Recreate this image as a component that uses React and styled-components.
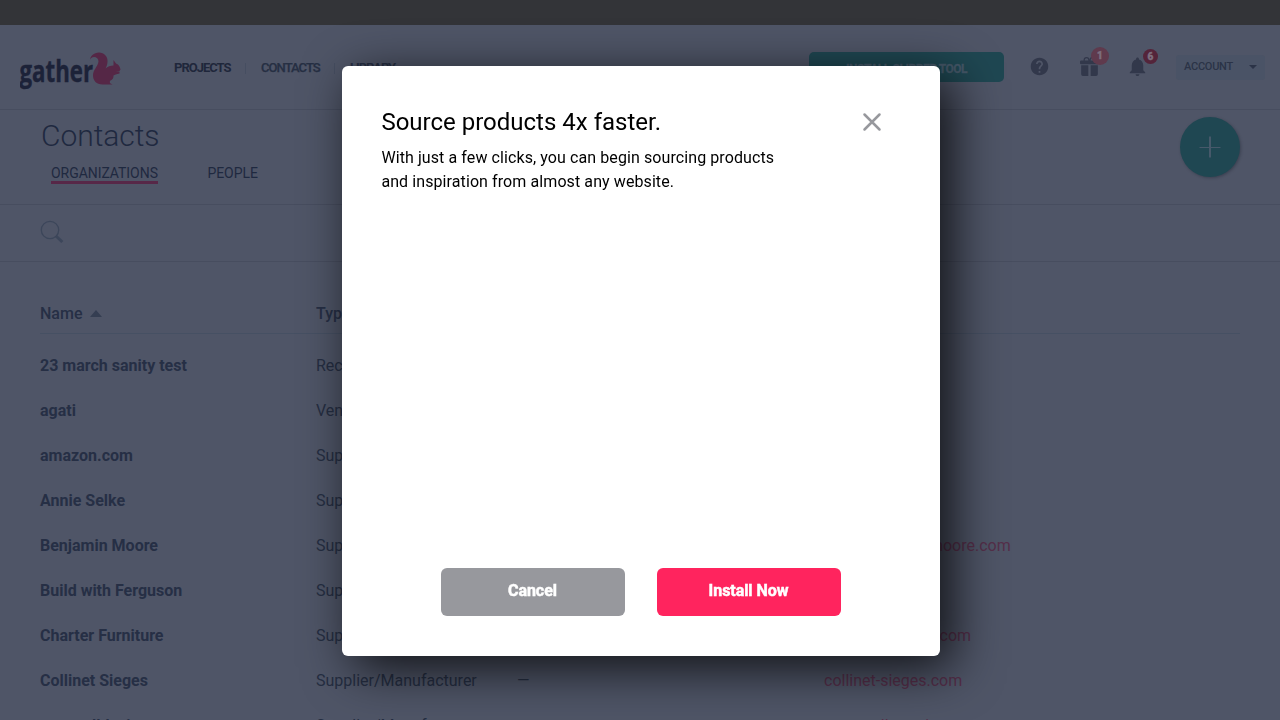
import React from 'react';
import styled, { createGlobalStyle } from 'styled-components';
import { MdHelp, MdNotifications } from 'react-icons/md';
import { BsGiftFill } from 'react-icons/bs';

const GlobalStyle = createGlobalStyle`
  * { box-sizing: border-box; }
  html, body { margin: 0; height: 100%; overflow: hidden; }
  body { font-family: Roboto, 'Liberation Sans', sans-serif; font-size: 16px; background: #4f5567; color: #262f45; }
  button { font-family: inherit; border: 0; padding: 0; }
`;

const Page = styled.div`
  height: 720px;
  overflow: hidden;
  display: flex;
  flex-direction: column;
`;
const TopBand = styled.div`
  flex: none;
  height: 25px;
  background: #333438;
`;
const Header = styled.header`
  flex: none;
  height: 85px;
  display: flex;
  align-items: center;
  padding: 0 15px 0 20px;
  border-bottom: 1px solid #474d5f;
`;
const Logo = styled.svg`
  display: block;
  width: 102px;
  height: 40px;
  margin: 6px 52px 0 0;
`;
const Nav = styled.nav`
  display: flex;
  align-items: center;
`;
const NavItem = styled.a`
  font-size: 13px;
  font-weight: ${(p) => (p.$active ? 700 : 500)};
  letter-spacing: ${(p) => (p.$active ? -1 : -0.95)}px;
  color: ${(p) => (p.$active ? '#1f273b' : '#262f43')};
  -webkit-text-stroke: ${(p) => (p.$active ? 0 : 0.25)}px currentColor;
  width: ${(p) => p.$width}px;
  white-space: nowrap;
`;
const Divider = styled.span`
  width: 1px;
  height: 11px;
  margin: 2px 15px 0 14px;
  background: #464e61;
`;
const Actions = styled.div`
  margin-left: auto;
  display: flex;
  align-items: center;
`;
const ClipperButton = styled.button`
  width: 195px;
  height: 30px;
  border-radius: 5px;
  background: #1f4752;
  color: #46596a;
  font-size: 12px;
  font-weight: 700;
  letter-spacing: -0.5px;
  -webkit-text-stroke: 0.3px currentColor;
  padding-top: 3px;
`;
const IconSlot = styled.span`
  position: relative;
  display: flex;
  color: #32384b;
  margin-left: ${(p) => p.$gap}px;
  margin-bottom: 2px;
`;
const Badge = styled.span`
  position: absolute;
  left: ${(p) => p.$left}px;
  top: ${(p) => p.$top}px;
  width: ${(p) => p.$size}px;
  height: ${(p) => p.$size}px;
  border-radius: 50%;
  display: flex;
  align-items: center;
  justify-content: center;
  background: ${(p) => p.$color};
  color: #7d6f7e;
  font-size: 10px;
  font-weight: 900;
  -webkit-text-stroke: 0.4px currentColor;
`;
const AccountButton = styled.button`
  display: flex;
  align-items: center;
  justify-content: space-between;
  width: 89px;
  height: 25px;
  margin-left: 27px;
  padding: 0 8px 2px;
  border-radius: 3px;
  background: #4a5366;
  color: #2b3347;
  font-size: 11px;
  font-weight: 500;
  letter-spacing: -0.25px;
`;
const Caret = styled.span`
  border: 4px solid transparent;
  border-top-color: #2b3347;
  border-bottom: 0;
  margin-top: 2px;
`;

const Intro = styled.section`
  flex: none;
  height: 95px;
  display: flex;
  justify-content: space-between;
  padding: 7px 40px 0 41px;
  border-bottom: 1px solid #474d5f;
`;
const Title = styled.h1`
  margin: 0;
  font-size: 30px;
  line-height: 38px;
  font-weight: 300;
  letter-spacing: -0.05px;
  color: #1f2940;
`;
const Tabs = styled.div`
  display: flex;
  gap: 49.5px;
  padding: 10px 0 0 10px;
`;
const Tab = styled.a`
  height: 19px;
  font-size: 14px;
  line-height: 17px;
  letter-spacing: -0.05px;
  color: #1f2940;
  border-bottom: 3px solid ${(p) => (p.$active ? '#572848' : 'transparent')};
`;
const AddButton = styled.button`
  width: 60px;
  height: 60px;
  border-radius: 50%;
  background: #1f4752;
  box-shadow: 1px 1px 3px rgba(20, 26, 40, 0.35);
  display: flex;
  align-items: center;
  justify-content: center;
`;
const SearchBar = styled.section`
  flex: none;
  height: 57px;
  display: flex;
  align-items: center;
  padding: 0 40px 2px;
  border-bottom: 1px solid #474d5f;
`;
const Table = styled.section`
  flex: none;
  padding: 32px 40px 0;
`;
const Row = styled.div`
  display: grid;
  grid-template-columns: 276px 201px 307px 1fr;
  align-items: center;
  height: 45px;
`;
const HeadRow = styled(Row)`
  height: 40px;
  margin-bottom: 9px;
  font-weight: 500;
  border-bottom: 1px solid #465063;
`;
const HeadCell = styled.span`
  display: flex;
  align-items: center;
  gap: 8px;
`;
const SortUp = styled.span`
  border: 6.500px solid transparent;
  border-bottom: 7px solid #353e52;
  border-top: 0;
`;
const Name = styled.span`
  font-weight: 700;
`;
const Cell = styled.span`
  color: #252e42;
`;
const Site = styled.a`
  color: #552f4a;
`;

const Dialog = styled.div`
  position: fixed;
  left: 342px;
  top: 66px;
  width: 598px;
  height: 590px;
  border-radius: 6px;
  background: #fff;
  color: #000;
  box-shadow: 12px 12px 50px rgba(0, 0, 0, 0.8);
  display: flex;
  flex-direction: column;
  justify-content: space-between;
  padding: 40px 58px 40px 39.4px;
`;
const DialogTop = styled.div`
  display: flex;
  justify-content: space-between;
  align-items: flex-start;
`;
const DialogTitle = styled.h2`
  margin: 0 0 8px;
  font-size: 24px;
  line-height: 32px;
  font-weight: 400;
`;
const DialogText = styled.p`
  margin: 0;
  line-height: 24px;
  letter-spacing: 0.09px;
`;
const CloseButton = styled.button`
  background: none;
  margin-top: 6px;
  display: flex;
`;
const DialogActions = styled.div`
  display: flex;
  gap: 32px;
  padding-left: 59.6px;
`;
const ActionButton = styled.button`
  width: 184px;
  height: 48px;
  border-radius: 6px;
  padding: 0 1px 3px 0;
  background: ${(p) => (p.$primary ? '#ff245e' : '#97989d')};
  color: #fff;
  font-size: 16px;
  font-weight: 700;
  letter-spacing: -0.05px;
  -webkit-text-stroke: 0.5px currentColor;
`;

const rows = [
  ['23 march sanity test', 'Rec', '', ''],
  ['agati', 'Vendor', '', ''],
  ['amazon.com', 'Supplier', '', ''],
  ['Annie Selke', 'Supplier', '', ''],
  ['Benjamin Moore', 'Supplier', '', 'www.benjaminmoore.com'],
  ['Build with Ferguson', 'Supplier', '', ''],
  ['Charter Furniture', 'Supplier', '', 'charterfurniture.com'],
  ['Collinet Sieges', 'Supplier/Manufacturer', '—', 'collinet-sieges.com'],
  ['corewalldesign', 'Supplier/Manufacturer', '', 'www.collameri.com'],
];

export default function App() {
  return (
    <>
      <GlobalStyle />
      <Page>
        <TopBand />
        <Header>
          <Logo viewBox="0 0 102 40">
            <text x="-0.5" y="32" fontFamily="Open Sans" fontWeight="700" fontSize="29.5" textLength="73.5" lengthAdjust="spacingAndGlyphs" fill="#1c2238" stroke="#1c2238" strokeWidth="0.4">gather</text>
            <path fill="#552746" transform="translate(0 1)" d="M70 10.500C69.500 5 74 1.500 79 1.500c5 0 9 4 8.500 9 0 3-1 5-2 7 2-2 5-3 8-3V9l2.500 3.500c3 1 4 3.500 4.500 6l-1 1.500h-4l4 0.500v2c-3 1-5 1-6 2 0 3-1 4-3 5-1 1-1 2 0 3l2 1h-10c-6 0-9.500-4-9.500-9 0-6 5-9 5.500-14 0-3-2-4.500-4.500-4.500-2 0-3 1-4 2.500z" />
          </Logo>
          <Nav>
            <NavItem $active $width={57}>PROJECTS</NavItem>
            <Divider />
            <NavItem $width={59}>CONTACTS</NavItem>
            <Divider />
            <NavItem $width={50}>LIBRARY</NavItem>
          </Nav>
          <Actions>
            <ClipperButton>INSTALL CLIPPER TOOL</ClipperButton>
            <IconSlot $gap={25}><MdHelp size={21} /></IconSlot>
            <IconSlot $gap={30}>
              <BsGiftFill size={19} />
              <Badge $left={11} $top={-10} $size={18} $color="#5f3a4d">1</Badge>
            </IconSlot>
            <IconSlot $gap={27}>
              <MdNotifications size={23} />
              <Badge $left={17} $top={-6} $size={15} $color="#54243a">6</Badge>
            </IconSlot>
            <AccountButton>ACCOUNT<Caret /></AccountButton>
          </Actions>
        </Header>
        <Intro>
          <div>
            <Title>Contacts</Title>
            <Tabs>
              <Tab $active>ORGANIZATIONS</Tab>
              <Tab>PEOPLE</Tab>
            </Tabs>
          </div>
          <AddButton>
            <svg width="22" height="22" viewBox="0 0 22 22">
              <path d="M11 0.5v21" stroke="#46596a" strokeWidth="2" />
              <path d="M0.5 11.5h21" stroke="#46596a" />
            </svg>
          </AddButton>
        </Intro>
        <SearchBar>
          <svg width="24" height="24" viewBox="0 0 24 24" fill="none" stroke="#3c465a">
            <circle cx="10" cy="10" r="8.7" strokeWidth="1.3" />
            <path d="M16 16l6.300 6" strokeWidth="3" />
          </svg>
        </SearchBar>
        <Table>
          <HeadRow>
            <HeadCell>Name <SortUp /></HeadCell>
            <HeadCell>Type</HeadCell>
          </HeadRow>
          {rows.map(([name, type, dash, site]) => (
            <Row key={name}>
              <Name>{name}</Name>
              <Cell>{type}</Cell>
              <Cell>{dash}</Cell>
              <Site>{site}</Site>
            </Row>
          ))}
        </Table>
      </Page>
      <Dialog role="dialog">
        <DialogTop>
          <div>
            <DialogTitle>Source products 4x faster.</DialogTitle>
            <DialogText>With just a few clicks, you can begin sourcing products<br />and inspiration from almost any website.</DialogText>
          </div>
          <CloseButton aria-label="Close">
            <svg width="20" height="20" viewBox="0 0 20 20" stroke="#97989d" strokeWidth="2.5" strokeLinecap="round">
              <path d="M2.5 2.5l15 15M17.5 2.5l-15 15" />
            </svg>
          </CloseButton>
        </DialogTop>
        <DialogActions>
          <ActionButton>Cancel</ActionButton>
          <ActionButton $primary>Install Now</ActionButton>
        </DialogActions>
      </Dialog>
    </>
  );
}
